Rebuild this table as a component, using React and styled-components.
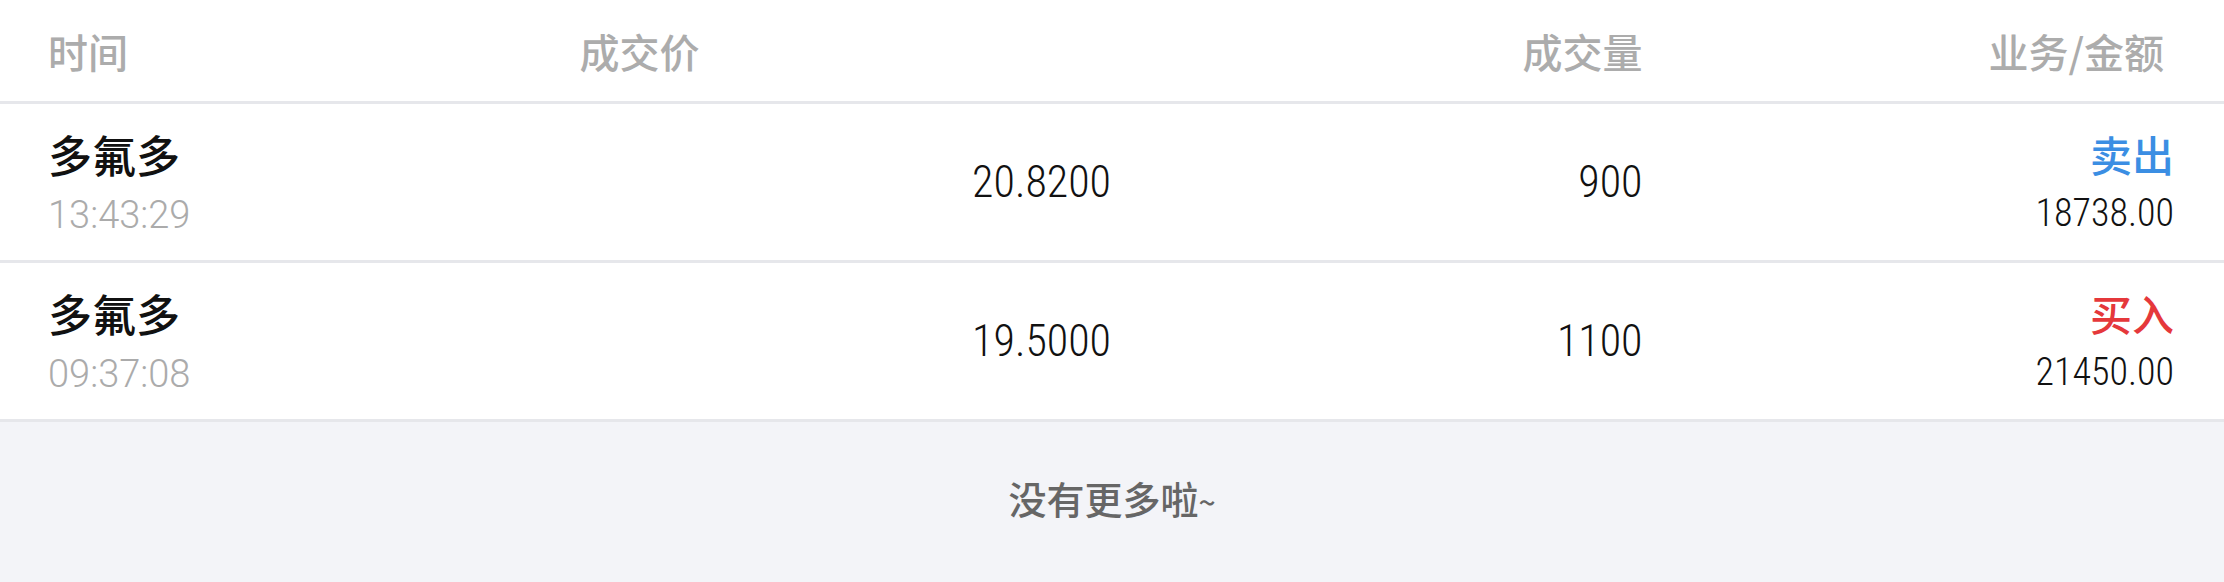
import React from 'react'
import styled, { createGlobalStyle } from 'styled-components'

const GlobalStyle = createGlobalStyle`
  html, body {
    margin: 0;
    padding: 0;
    background: #f3f4f8;
  }
  body {
    font-family: "Noto Sans CJK SC", "Noto Sans", sans-serif;
  }
`

const trades = [
  { name: '多氟多', time: '13:43:29', price: '20.8200', volume: '900', side: 'sell', amount: '18738.00' },
  { name: '多氟多', time: '09:37:08', price: '19.5000', volume: '1100', side: 'buy', amount: '21450.00' },
]

function App() {
  return (
    <>
      <GlobalStyle />
      <Page>
        <HeaderRow>
          <HeadCell>时间</HeadCell>
          <HeadCell>成交价</HeadCell>
          <HeadCell align="right">成交量</HeadCell>
          <HeadCell align="right" pad>业务/金额</HeadCell>
        </HeaderRow>

        {trades.map((t, i) => (
          <Row key={i}>
            <Stack>
              <Name>{t.name}</Name>
              <Time>{t.time}</Time>
            </Stack>
            <ValueCell>
              <Num>{t.price}</Num>
            </ValueCell>
            <ValueCell>
              <Num>{t.volume}</Num>
            </ValueCell>
            <Stack right>
              <Side buy={t.side === 'buy'}>{t.side === 'buy' ? '买入' : '卖出'}</Side>
              <Amount>{t.amount}</Amount>
            </Stack>
          </Row>
        ))}

        <Footer>
          没有更多啦<Tilde>~</Tilde>
        </Footer>
      </Page>
    </>
  )
}

export default App

const Page = styled.div`
  width: 100%;
  background: #fff;
`

const Grid = styled.div`
  display: grid;
  grid-template-columns: repeat(4, 1fr);
  padding: 0 50px 0 48px;
  border-bottom: 3px solid #e6e7eb;
  background: #fff;
`

const HeaderRow = styled(Grid)`
  height: 101px;
  align-items: center;
`

const HeadCell = styled.div`
  font-size: 40px;
  line-height: 48px;
  font-weight: 500;
  color: #acacac;
  text-align: ${props => props.align || 'left'};
  padding-right: ${props => (props.pad ? '10px' : '0')};
`

const Row = styled(Grid)`
  height: 156px;
  align-items: center;
`

const Stack = styled.div`
  display: flex;
  flex-direction: column;
  align-items: ${props => (props.right ? 'flex-end' : 'flex-start')};
  gap: 12px;
`

const Name = styled.div`
  font-size: 44px;
  line-height: 53px;
  font-weight: 500;
  color: #111;
`

const Digits = styled.span`
  font-family: Roboto, "Liberation Sans", sans-serif;
  font-stretch: 82%;
  font-weight: 300;
  color: #111;
`

const Num = styled(Digits)`
  font-size: 44px;
`

const Time = styled(Digits)`
  display: block;
  font-size: 38px;
  line-height: 44px;
  font-stretch: 92%;
  color: #ababab;
`

const ValueCell = styled.div`
  display: flex;
  justify-content: flex-end;
  align-items: center;
`

const Side = styled.div`
  font-size: 42px;
  line-height: 50px;
  font-weight: 500;
  color: ${props => (props.buy ? '#e5383b' : '#3b8ee3')};
`

const Amount = styled(Digits)`
  display: block;
  font-size: 38px;
  line-height: 44px;
  font-stretch: 82%;
`

const Footer = styled.div`
  background: #f3f4f8;
  height: 159px;
  padding-top: 56px;
  box-sizing: border-box;
  text-align: center;
  font-size: 38px;
  line-height: 40px;
  font-weight: 500;
  color: #666;
`

const Tilde = styled.span`
  font-size: 30px;
`
